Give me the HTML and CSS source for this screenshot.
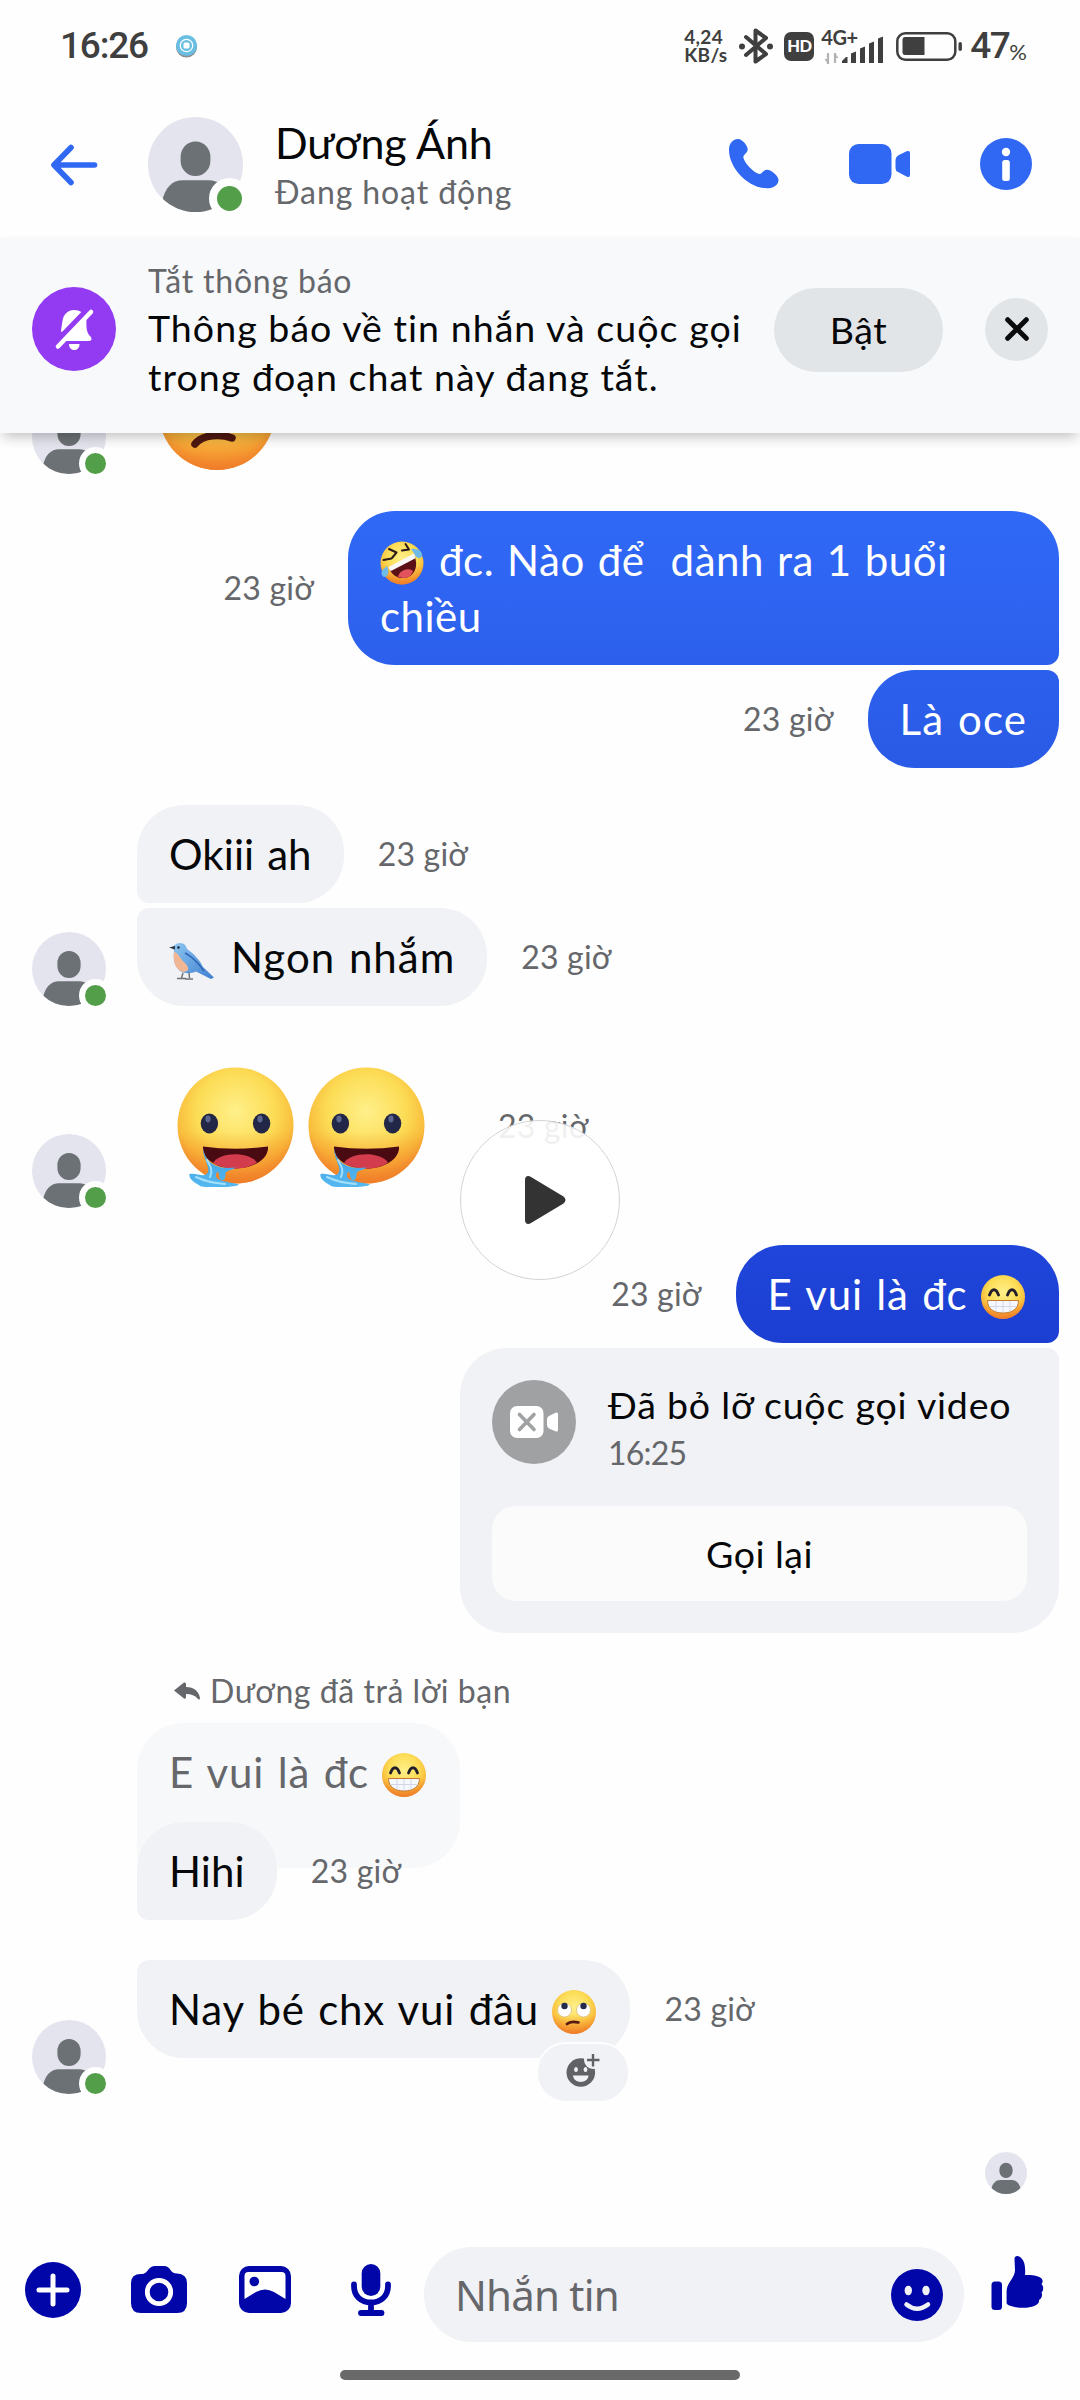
FILE: index.html
```html
<!DOCTYPE html>
<html lang="vi">
<head>
<meta charset="utf-8">
<title>Dương Ánh</title>
<link rel="stylesheet" href="styles.css">
</head>
<body>
<svg class="defs" aria-hidden="true">
  <defs>
    <radialGradient id="face" cx="50%" cy="38%" r="62%">
      <stop offset="0" stop-color="#fff08a"/><stop offset=".55" stop-color="#fcdc55"/><stop offset=".82" stop-color="#f9bd3c"/><stop offset="1" stop-color="#ee8a2e"/>
    </radialGradient>
    <linearGradient id="heat" x1="0" y1="0" x2="0" y2="1">
      <stop offset=".55" stop-color="#f58a28" stop-opacity="0"/><stop offset="1" stop-color="#f07a28" stop-opacity=".85"/>
    </linearGradient>
    <linearGradient id="bird-body" x1="0" y1="0" x2="1" y2="1">
      <stop offset="0" stop-color="#8fc8f2"/><stop offset="1" stop-color="#3f7fd0"/>
    </linearGradient>
    <linearGradient id="water" x1="0" y1="0" x2="0" y2="1">
      <stop offset="0" stop-color="#3f9fe0"/><stop offset="1" stop-color="#55b8f0"/>
    </linearGradient>
    <clipPath id="round"><circle cx="37" cy="37" r="37"/></clipPath>
    <symbol id="person" viewBox="0 0 74 74">
      <circle class="person-bg" cx="37" cy="37" r="37"/>
      <g clip-path="url(#round)" class="person-fg">
        <rect x="25.4" y="19" width="23.2" height="27" rx="11.4" ry="12"/>
        <path d="M11 66C13 55 19 49.3 27 49.3H47C55 49.3 61 55 63 66V74H11Z"/>
      </g>
    </symbol>
    <symbol id="grin" viewBox="0 0 44 44">
      <circle cx="22" cy="22" r="22" fill="url(#face)"/><circle cx="22" cy="22" r="22" fill="url(#heat)"/>
      <path d="M8.500 20C11 13 15 13 17.500 20M26.500 20C29 13 33 13 35.500 20" fill="none" stroke="#231c2b" stroke-width="2.800" stroke-linecap="round"/>
      <path d="M6.500 25.500H37.500C37.500 34 31 38 22 38S6.500 34 6.500 25.500Z" fill="#f6f8ff" stroke="#c77b31" stroke-width="1"/>
      <path d="M8 31.500H36M15 26V36.500M22 26V37.500M29 26V36.500" fill="none" stroke="#cfd4e6" stroke-width=".9"/>
    </symbol>
    <symbol id="drool" viewBox="0 0 117 120">
      <circle cx="58.500" cy="58.500" r="58" fill="url(#face)"/><circle cx="58.500" cy="58.500" r="58" fill="url(#heat)"/>
      <ellipse cx="32.400" cy="56.500" rx="8.700" ry="10" fill="#232747"/><ellipse cx="84.600" cy="56.500" rx="8.700" ry="10" fill="#232747"/>
      <ellipse cx="31" cy="52" rx="2.600" ry="3.400" fill="#5b6690"/><ellipse cx="83" cy="52" rx="2.600" ry="3.400" fill="#5b6690"/>
      <path d="M26 79.500Q58 84 91 79.500C92 91 78 101.500 58 101.500S25 91 26 79.500Z" fill="#4a0a12"/>
      <path d="M36 96C42 85 72 84 80 95.500C74 99.500 67 101.500 58 101.500S42 99.500 36 96Z" fill="#d23c4c"/>
      <path d="M26 81C28 92 33 97 41 99.500C47 101.500 53 101 59 100.500C54 104 48 103 48.500 108C48.500 115 42 115 42 108C42 104 39 104 39 109C39 114 53 115 62 117.500C60 121 25 121 23 119C20 116.500 11 113 12.500 107C19 105 28 112 31 105C33 100 26 91 26 81Z" fill="url(#water)"/>
      <path d="M30 93C34 100 36 104 33 110M19 110C25 113 36 116 48 117" fill="none" stroke="#a5e0fb" stroke-width="2" stroke-linecap="round"/>
    </symbol>
  </defs>
</svg>

<main class="phone">
  <header class="status">
    <span class="clock">16:26</span>
    <svg class="live-dot" viewBox="0 0 21 23"><circle cx="10.500" cy="12" r="10.500" fill="#8b8f93"/><circle cx="10.500" cy="10.500" r="10.500" fill="#69bfe2"/><circle cx="10.500" cy="10.500" r="6.200" fill="none" stroke="#fff" stroke-width="1.300"/><rect x="7.500" y="7.500" width="6" height="6" rx="1.500" fill="#fff"/></svg>
    <div class="status-right">
      <div class="speed"><span>4,24</span><span>KB/s</span></div>
      <svg class="bt" viewBox="0 0 34 36"><path d="M7 9L27 26L16.500 33.500V2.500L27 10L7 27" fill="none" stroke="#3f3f3f" stroke-width="4" stroke-linejoin="round" stroke-linecap="round"/><circle cx="3" cy="18.500" r="3" fill="#3f3f3f"/><circle cx="31" cy="18.500" r="3" fill="#3f3f3f"/></svg>
      <span class="hd">HD</span>
      <span class="network">
        <b>4G+</b>
        <svg viewBox="0 0 62 28"><path d="M7 17V28M14 27V17" stroke="#b3b3b3" stroke-width="2.200"/><path d="M3.500 23H7V28ZM14 17V22H17.500Z" fill="#b3b3b3"/><path d="M21 27v-2l4-4h1.500v6zM30 27V17.500l5-2V27zM39 27V12.500l5-2V27zM48 27V7.500l5-2V27zM57 27V2.500l5-2V27z" fill="#3f3f3f"/></svg>
      </span>
      <svg class="battery" viewBox="0 0 67 29"><rect x="1.300" y="1.300" width="58" height="26.400" rx="8" fill="none" stroke="#3f3f3f" stroke-width="2.500"/><path d="M9 5H28.500V23H9Q6.500 23 6.500 20V8Q6.500 5 9 5Z" fill="#3f3f3f"/><rect x="62.500" y="10" width="3.400" height="9" rx="1.700" fill="#3f3f3f"/></svg>
      <span class="percent">47</span><span class="sign">%</span>
    </div>
  </header>

  <nav class="bar">
    <svg class="back" viewBox="0 0 48 42"><path d="M44.500 21H4M21 3.500L4 21L21 38.500" fill="none" stroke="#3068f4" stroke-width="5.600" stroke-linecap="round" stroke-linejoin="round"/></svg>
    <span class="avatar big"><svg><use href="#person"/></svg></span>
    <div class="who"><h1>Dương Ánh</h1><p>Đang hoạt động</p></div>
    <svg class="call" viewBox="0 0 50 50"><path d="M0 11C0 4 4 0 9 0C13 0 18.500 6 18.700 10.500C18.800 14 14.300 15.500 14.300 18.500C16 25 25 34 30.500 35C33 35 34 30.700 38 30.700C42.500 30.700 49.500 37 49.500 41C49.500 46 44.500 49.300 38 49.300C19 49.300 0 29 0 11Z" fill="#3068f4"/></svg>
    <svg class="video" viewBox="0 0 62 40"><rect width="42.500" height="40" rx="9.500" fill="#3068f4"/><path d="M46.500 16Q46.500 13 49 11.500L57.500 7.300Q61 6 61 9V31Q61 34 57.500 32.500L49 28Q46.500 27 46.500 24Z" fill="#3068f4"/></svg>
    <svg class="info" viewBox="0 0 52 52"><circle cx="26" cy="26" r="26" fill="#3068f4"/><circle cx="26" cy="14" r="4.200" fill="#fff"/><rect x="22.200" y="22" width="7.600" height="21" rx="2.500" fill="#fff"/></svg>
  </nav>

  <section class="banner">
    <svg class="bell" viewBox="0 0 84 84"><circle cx="42" cy="42" r="42" fill="#923bf3"/><g fill="#fff"><path d="M29 43.500L30.500 34C31.500 27 36 23 42 23C45 23 47.500 23.800 49.300 25L30.500 44.500Q28.700 45.500 29 43.500Z"/><path d="M54.500 28L31.500 54H57C60 54 60.500 51 57.500 48.500C53.500 44 54.500 36 54.500 28Z"/><path d="M37 57H47.500C47.500 65 37 65 37 57Z"/></g><path d="M59 25L26 59.500" stroke="#fff" stroke-width="4.500" stroke-linecap="round"/></svg>
    <div class="notice"><h2>Tắt thông báo</h2><p>Thông báo về tin nhắn và cuộc gọi<br>trong đoạn chat này đang tắt.</p></div>
    <button class="enable">Bật</button>
    <button class="close" aria-label="Đóng"><svg viewBox="0 0 24 24"><path d="M2.700 2.700L21.300 21.300M21.300 2.700L2.700 21.300" stroke="#0b0b0c" stroke-width="5" stroke-linecap="round"/></svg></button>
  </section>

  <section class="chat">
    <div class="row in peek">
      <span class="avatar"><svg><use href="#person"/></svg></span>
      <svg class="sad" viewBox="0 0 116 116"><circle cx="58" cy="58" r="58" fill="url(#face)"/><circle cx="58" cy="58" r="58" fill="url(#heat)"/><path d="M36 90C44 80 62 80 73 84" fill="none" stroke="#4f1710" stroke-width="7.500" stroke-linecap="round"/></svg>
    </div>

    <div class="row out gap">
      <time>23 giờ</time>
      <div class="bubble b-first wide"><svg class="emoji" viewBox="0 0 44 44"><circle cx="22" cy="22" r="21.500" fill="url(#face)"/><circle cx="22" cy="22" r="21.500" fill="url(#heat)"/><path d="M9 8L16.500 11.500L12 17M3.500 19L11.500 17.500M22 9.500L29 8.500L25.500 3" fill="none" stroke="#2a1a18" stroke-width="2" stroke-linecap="round" stroke-linejoin="round"/><path d="M9 27L34 14C39 24 35 34 27 36.500C19 38.500 12 35 9 27Z" fill="#5b1018"/><path d="M8.500 26L34 12.500Q35.500 15.500 35 17.500L11 30Q9 29 8.500 26Z" fill="#f8f8fb"/><path d="M18 35.500C20 29 28 26 33 30C31.500 34 30 35.500 27 36.500C24 37.300 20.500 37 18 35.500Z" fill="#e2525c"/><path d="M31 8C37 7 43 10 42 15C41 18.500 35.500 17.500 34.500 13ZM7 25C9 29 9 35 5 36C1 36 1 31 2.500 29Z" fill="#6fbbe8"/></svg> đc. Nào để&nbsp; dành ra 1 buổi<br>chiều</div>
    </div>
    <div class="row out gap-near">
      <time>23 giờ</time>
      <div class="bubble b-last">Là oce</div>
    </div>

    <div class="row in gap">
      <span class="slot"></span>
      <div class="bubble g-first">Okiii ah</div>
      <time>23 giờ</time>
    </div>
    <div class="row in gap-near">
      <span class="avatar"><svg><use href="#person"/></svg></span>
      <div class="bubble g-last"><svg class="emoji bird" viewBox="0 0 45 38"><path d="M2 5.500L8 1.500C14 -.5 17 3 18 7C24 11 31 18 34 25L45 35.500L42 37L27 29.500C22 32 14 32 10 28C3 21 5 12 5 8Z" fill="url(#bird-body)"/><path d="M5 10C4 20 6 27 14 30C20 30 21 26 16 21C11 17 10 11 5 10Z" fill="#f1b795"/><path d="M0 5.500L6 4V7.500Z" fill="#30343c"/><circle cx="9.500" cy="5.500" r="1.200" fill="#16202c"/><path d="M14 31L12.500 36M20 30.500L20.500 36M8 36.500H17M16 37H24" stroke="#6f7379" stroke-width="1.500"/><path d="M16 11C24 15 30 22 35 29" stroke="#2d65b4" stroke-width="1.500" fill="none"/></svg><span class="after-bird">Ngon nhắm</span></div>
      <time>23 giờ</time>
    </div>

    <div class="row in gap-sticker stickers">
      <span class="avatar"><svg><use href="#person"/></svg></span>
      <div class="pair"><svg><use href="#drool"/></svg><svg><use href="#drool"/></svg></div>
      <time>23 giờ</time>
      <span class="play"><svg viewBox="0 0 41 48"><path d="M0 4C0 0 3-1 6 1L38.500 20.500Q42.500 24 38.500 27.500L6 47C3 49 0 48 0 44Z" fill="#333"/></svg></span>
    </div>

    <div class="row out gap">
      <time>23 giờ</time>
      <div class="bubble b-deep">E vui là đc <svg class="emoji"><use href="#grin"/></svg></div>
    </div>
    <div class="card">
      <div class="card-head">
        <svg viewBox="0 0 84 84"><circle cx="42" cy="42" r="42" fill="#a0a1a3"/><rect x="18" y="26" width="33.500" height="32" rx="7" fill="#fff"/><path d="M27.500 34.500L42 49.500M42 34.500L27.500 49.500" stroke="#a0a1a3" stroke-width="3.600" stroke-linecap="round"/><path d="M55 39Q55 37 57 36L64 32.500Q66 32 66 34V50Q66 52 64 51.500L57 48.500Q55 47.500 55 45Z" fill="#fff"/></svg>
        <div><h3>Đã bỏ lỡ cuộc gọi video</h3><p>16:25</p></div>
      </div>
      <button>Gọi lại</button>
    </div>

    <div class="reply-label"><svg viewBox="0 0 26 18"><path d="M0 8.500L10 .5Q12 0 12 2V5C20 5 25 9.500 26 16Q25.500 19 23.500 16.500Q20 12 12 12V15Q12 17.500 10 16.500Z" fill="#65676b"/></svg>Dương đã trả lời bạn</div>
    <div class="bubble quoted">E vui là đc <svg class="emoji"><use href="#grin"/></svg></div>
    <div class="row in answer">
      <span class="slot"></span>
      <div class="bubble g-first">Hihi</div>
      <time>23 giờ</time>
    </div>

    <div class="row in last">
      <span class="avatar"><svg><use href="#person"/></svg></span>
      <div class="bubble g-last">Nay bé chx vui đâu <svg class="emoji" viewBox="0 0 44 44"><circle cx="22" cy="22" r="22" fill="url(#face)"/><circle cx="22" cy="22" r="22" fill="url(#heat)"/><circle cx="12.500" cy="20" r="7" fill="#fff" stroke="#d9b77a" stroke-width=".7"/><circle cx="31.500" cy="20" r="7" fill="#fff" stroke="#d9b77a" stroke-width=".7"/><circle cx="12.500" cy="16" r="3.200" fill="#25294a"/><circle cx="31.500" cy="16" r="3.200" fill="#25294a"/><path d="M15 34C18 31 22 31.500 26.500 32.500" fill="none" stroke="#571a12" stroke-width="2.700" stroke-linecap="round"/></svg>
        <span class="react"><svg viewBox="0 0 34 34"><circle cx="14.800" cy="18.500" r="14.300" fill="#606266"/><circle cx="27" cy="6" r="9" fill="#f1f2f6"/><path d="M27 0V12.500M21 6H33.500" stroke="#606266" stroke-width="2.400"/><ellipse cx="10" cy="15.500" rx="1.900" ry="2.600" fill="#f1f2f6"/><ellipse cx="19.500" cy="15.500" rx="1.900" ry="2.600" fill="#f1f2f6"/><path d="M7 21.500H22.500C22 30 7.500 30 7 21.500Z" fill="#f1f2f6"/></svg></span>
      </div>
      <time>23 giờ</time>
    </div>
    <svg class="seen"><use href="#person"/></svg>
  </section>

  <footer class="composer">
    <svg class="plus" viewBox="0 0 56 56"><circle cx="28" cy="28" r="28" fill="#0006a8"/><path d="M28 14V42M14 28H42" stroke="#fff" stroke-width="5" stroke-linecap="round"/></svg>
    <svg class="camera" viewBox="0 0 56 47"><path d="M10 8C14 8 15.500 6 17 4Q20 0 24 0H33Q37 0 39.500 4C41 6 42.500 7.500 46 7.500Q56 8 56 17V37Q56 47 46 47H10Q0 47 0 37V17Q0 8 10 8Z" fill="#0006a8"/><circle cx="28" cy="26" r="11.700" fill="none" stroke="#fff" stroke-width="4.800"/></svg>
    <svg class="gallery" viewBox="0 0 52 47"><rect width="52" height="47" rx="10" fill="#0006a8"/><path d="M5.500 10Q5.500 6 9.500 6H42.500Q46.500 6 46.500 10V33L35 26Q26 21 17 26L5.500 33Z" fill="#fff"/><circle cx="15.300" cy="15.500" r="4.800" fill="#0006a8"/></svg>
    <svg class="mic" viewBox="0 0 40 52"><rect x="10.700" y="0" width="18.600" height="32" rx="9.300" fill="#0006a8"/><path d="M3 20.500V22C3 32 10 38.500 20 38.500S37 32 37 22V20.500M20 39V48M10 49H30.500" fill="none" stroke="#0006a8" stroke-width="5.800" stroke-linecap="round"/></svg>
    <div class="field"><span>Nhắn tin</span><svg viewBox="0 0 52 52"><circle cx="26" cy="26" r="26" fill="#0006a8"/><ellipse cx="17.300" cy="21.500" rx="3.700" ry="4.800" fill="#f1f2f6"/><ellipse cx="35" cy="21.500" rx="3.700" ry="4.800" fill="#f1f2f6"/><path d="M15.500 35.500Q26 44 37 35.500" fill="none" stroke="#f1f2f6" stroke-width="4.500" stroke-linecap="round"/></svg></div>
    <svg class="like" viewBox="0 0 52 54"><rect x=".5" y="25.500" width="10.500" height="28.500" rx="3.500" fill="#0006a8"/><path d="M15.600 35C15.600 27 24 22 24 14L23.500 3C23.500 -.5 27 -.5 29 1C33 4 34.800 9 34 19C42 18.500 48 20 50.500 22.500C52.500 25 51.500 27 50.500 28C53 30.500 52.500 34.500 50.500 36.500C52 39.500 50 43 48 44C49 49.500 40 52 32 51.800C25 51.600 15.600 50 15.600 47Z" fill="#0006a8"/></svg>
  </footer>
  <div class="home"></div>
</main>
</body>
</html>
```
FILE: styles.css
```css
*, *::after { box-sizing: border-box; margin: 0; padding: 0; }
body { width: 1080px; background: #fefefe; font-family: Lato, "Noto Sans", sans-serif; color: #060708; }
svg { display: block; flex: none; overflow: visible; }
button { border: 0; font: inherit; color: inherit; }
h1, h2, h3 { font-weight: 400; }
.defs { position: absolute; width: 0; height: 0; }
.phone { height: 2400px; display: flex; flex-direction: column; overflow: hidden; }

/* status bar */
.status { height: 92px; padding-left: 60px; display: flex; align-items: center; color: #3f3f3f; }
.clock { width: 116px; font: 500 37px/92px Roboto, sans-serif; letter-spacing: -1.2px; }
.live-dot { width: 21px; height: 23px; }
.status-right { margin-left: auto; padding-right: 53px; display: flex; align-items: center; }
.speed { width: 55px; display: flex; flex-direction: column; font: 700 19px/18px Lato, sans-serif; letter-spacing: .3px; }
.bt { width: 34px; height: 36px; margin-right: 11px; }
.hd { width: 30px; height: 29px; margin-right: 7px; border-radius: 7px; background: #3f3f3f; color: #fff; font: 900 16.5px/29px Lato, sans-serif; letter-spacing: -.5px; text-align: center; }
.network { display: flex; flex-direction: column; width: 75px; height: 32px; }
.network b { height: 6px; font: 700 20px/14px Lato, sans-serif; letter-spacing: -.4px; }
.network svg { width: 62px; height: 28px; }
.battery { width: 67px; height: 29px; margin-right: 7px; }
.percent { font: 500 37px/92px Roboto, sans-serif; letter-spacing: -1.5px; }
.sign { padding-top: 11px; font-size: 22px; line-height: 30px; }

/* conversation bar */
.bar { height: 145px; padding: 0 48px 0 50px; display: flex; align-items: center; }
.back { width: 48px; height: 42px; margin-right: 50px; }
.avatar { position: relative; flex: none; width: 74px; height: 74px; }
.avatar > svg { width: 100%; height: 100%; }
.avatar::after { content: ""; position: absolute; right: -6px; bottom: -6px; width: 33px; height: 33px; border: 6px solid #fefefe; border-radius: 50%; background: #539e49; }
.avatar.big { width: 95px; height: 95px; margin-right: 32px; }
.avatar.big::after { right: -7px; bottom: -7px; width: 41px; height: 41px; border-width: 8px; }
.person-bg { fill: #e4e4ee; }
.person-fg { fill: #6b7174; }
.who { flex: 1; padding-top: 2px; white-space: nowrap; }
.who h1 { font-size: 43px; line-height: 52px; letter-spacing: -.1px; }
.who p { font-size: 32px; line-height: 46px; letter-spacing: .9px; color: #65676b; }
.call { width: 50px; height: 50px; margin: -1px 70px 0 0; }
.video { width: 62px; height: 40px; margin: -1px 69px 0 0; }
.info { width: 52px; height: 52px; margin-top: -1px; }

/* muted banner */
.banner { position: relative; z-index: 1; height: 196px; padding: 0 32px; display: flex; align-items: center; background: #f8f9fb; box-shadow: 0 7px 12px -3px rgba(0, 0, 0, .24); }
.bell { width: 84px; height: 84px; margin: -12px 32px 0 0; }
.notice { flex: 1; padding-bottom: 11px; }
.notice h2 { font-size: 32px; line-height: 44px; letter-spacing: .8px; color: #65676b; }
.notice p { font-size: 37.5px; line-height: 49px; letter-spacing: 1.05px; white-space: nowrap; }
.enable { width: 169px; height: 84px; margin-top: -10px; border-radius: 42px; background: #e2e5e8; font-size: 37.5px; line-height: 84px; letter-spacing: .5px; }
.close { width: 63px; height: 63px; margin: -12px 0 0 42px; border-radius: 50%; background: #e2e5e8; display: grid; place-items: center; }
.close svg { width: 24px; height: 24px; }

/* messages */
.chat { height: 1814px; display: flex; flex-direction: column; }
.row { position: relative; display: flex; align-items: center; }
.in { padding-left: 32px; }
.in > .avatar, .slot { align-self: flex-end; width: 74px; margin-right: 31px; flex: none; }
.out { justify-content: flex-end; padding-right: 21px; }
.gap { margin-top: 37px; }
.gap-sticker { margin-top: 38px; }
.gap-near { margin-top: 5px; }
time { font-size: 32px; line-height: 40px; letter-spacing: .2px; color: #65676b; white-space: nowrap; }
.in time { margin-left: 34px; }
.out time { margin-right: 34px; }
.peek { height: 41px; overflow: hidden; align-items: flex-end; }
.sad { width: 116px; height: 116px; margin: 0 0 4px 22px; }
.bubble { position: relative; height: 98px; padding: 21px 32px; border-radius: 47px; font-size: 42px; line-height: 56px; letter-spacing: .8px; word-spacing: 2px; white-space: nowrap; background: #f1f2f6; }
.out .bubble { color: #fff; }
.bubble.wide { width: 711px; height: 154px; letter-spacing: .5px; word-spacing: 1.8px; }
.b-first { border-bottom-right-radius: 12px; background: linear-gradient(#3069f7, #2c60ec); }
.b-last { border-top-right-radius: 12px; letter-spacing: 1.1px; background: linear-gradient(#2c60ec, #295ae6); }
.b-deep { border-bottom-right-radius: 12px; background: linear-gradient(#1f45da, #1c3fd2); }
.g-first { border-bottom-left-radius: 12px; letter-spacing: .1px; }
.g-last { border-top-left-radius: 12px; }
.emoji { display: inline-block; width: 44px; height: 44px; vertical-align: -9px; margin-right: 2px; }
.bird { width: 45px; height: 38px; vertical-align: -7px; }
.after-bird { margin-left: 15px; letter-spacing: 1px; }
.stickers { height: 164px; }
.pair { display: flex; gap: 14px; margin: 2px 39px 0 40px; }
.pair svg { width: 117px; height: 120px; }
.pair + time { margin-left: 34px; }
.play { position: absolute; left: 460px; top: 76px; width: 160px; height: 160px; border: 1px solid #d4d4d4; border-radius: 50%; background: rgba(255, 255, 255, .9); }
.play svg { width: 41px; height: 48px; margin: 55px 0 0 64px; }

/* missed call */
.card { align-self: flex-end; width: 599px; height: 285px; margin: 5px 21px 0 0; padding: 32px; border-radius: 47px; border-top-right-radius: 12px; background: #f1f2f6; }
.card-head { display: flex; gap: 32px; height: 84px; }
.card-head > svg { width: 84px; height: 84px; }
.card-head h3 { font-size: 37.5px; line-height: 50px; letter-spacing: .8px; white-space: nowrap; }
.card-head p { font-size: 32px; line-height: 45px; letter-spacing: -.8px; color: #65676b; }
.card button { display: block; width: 535px; height: 95px; margin-top: 42px; border-radius: 24px; background: #fbfbfb; font-size: 37.5px; line-height: 95px; letter-spacing: .5px; }

/* reply */
.reply-label { margin: 38px 0 0 174px; display: flex; align-items: center; gap: 10px; font-size: 32px; line-height: 40px; letter-spacing: .55px; color: #65676b; }
.reply-label svg { width: 26px; height: 18px; }
.bubble.quoted { align-self: flex-start; height: 145px; margin: 12px 0 0 137px; color: #65676b; background: #f7f8fa; border-bottom-left-radius: 12px; }
.answer { margin-top: -46px; }
.last { height: 134px; margin-top: 40px; align-items: flex-start; }
.last time { margin-top: 29px; }
.react { position: absolute; right: 0; bottom: -45px; width: 94px; height: 61px; border: 2px solid #fefefe; border-radius: 30px; background: #f1f2f6; display: grid; place-items: center; }
.react svg { width: 34px; height: 34px; margin-bottom: 3px; }
.seen { align-self: flex-end; width: 42px; height: 42px; margin: 58px 53px 0 0; }

/* composer */
.composer { height: 95px; padding-left: 25px; display: flex; align-items: center; }
.plus { width: 56px; height: 56px; margin: -10px 50px 0 0; }
.camera { width: 56px; height: 47px; margin: -10px 52px 0 0; }
.gallery { width: 52px; height: 47px; margin: -10px 60px 0 0; }
.mic { width: 40px; height: 52px; margin: -10px 33px 0 0; }
.field { width: 540px; height: 95px; padding: 0 21px 0 31px; border-radius: 48px; background: #f1f2f6; display: flex; align-items: center; justify-content: space-between; font: 42px/95px "Noto Sans", sans-serif; letter-spacing: -.8px; color: #65676b; }
.field svg { width: 52px; height: 52px; margin-top: 1px; }
.like { width: 52px; height: 54px; margin: -24px 0 0 27px; }
.home { width: 400px; height: 10px; margin: 28px auto 0; border-radius: 5px; background: #696969; }
```
